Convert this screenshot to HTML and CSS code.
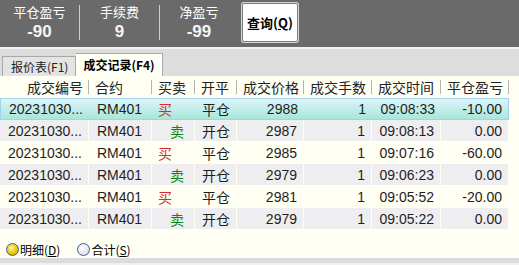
FILE: index.html
```html
<!DOCTYPE html>
<html lang="zh-CN">

<head>
    <meta charset="UTF-8">
    <title>成交记录</title>
    <link rel="stylesheet" href="styles.css">
</head>

<body>
    <div class="app">
        <div class="summary">
            <div class="stat">
                <div class="stat-label">平仓盈亏</div>
                <div class="stat-value">-90</div>
            </div>
            <div class="divider"></div>
            <div class="stat">
                <div class="stat-label">手续费</div>
                <div class="stat-value">9</div>
            </div>
            <div class="divider"></div>
            <div class="stat stat-last">
                <div class="stat-label">净盈亏</div>
                <div class="stat-value">-99</div>
            </div>
            <button class="query-btn">查询(<u>Q</u>)</button>
        </div>

        <div class="tabs">
            <div class="tab">报价表(F1)</div>
            <div class="tab active">成交记录(F4)</div>
        </div>

        <div class="panel">
            <table class="trades">
                <colgroup>
                    <col style="width:89px">
                    <col style="width:63px">
                    <col style="width:43px">
                    <col style="width:42px">
                    <col style="width:67px">
                    <col style="width:68px">
                    <col style="width:69px">
                    <col style="width:68px">
                </colgroup>
                <thead>
                    <tr>
                        <th class="first">成交编号</th>
                        <th>合约</th>
                        <th>买卖</th>
                        <th>开平</th>
                        <th>成交价格</th>
                        <th>成交手数</th>
                        <th>成交时间</th>
                        <th>平仓盈亏</th>
                    </tr>
                </thead>
                <tbody>
                    <tr class="selected">
                        <td>20231030...</td>
                        <td>RM401</td>
                        <td class="buy">买</td>
                        <td class="cjk">平仓</td>
                        <td class="num">2988</td>
                        <td class="num">1</td>
                        <td class="num">09:08:33</td>
                        <td class="num">-10.00</td>
                    </tr>
                    <tr class="alt">
                        <td>20231030...</td>
                        <td>RM401</td>
                        <td class="sell">卖</td>
                        <td class="cjk">开仓</td>
                        <td class="num">2987</td>
                        <td class="num">1</td>
                        <td class="num">09:08:13</td>
                        <td class="num">0.00</td>
                    </tr>
                    <tr>
                        <td>20231030...</td>
                        <td>RM401</td>
                        <td class="buy">买</td>
                        <td class="cjk">平仓</td>
                        <td class="num">2985</td>
                        <td class="num">1</td>
                        <td class="num">09:07:16</td>
                        <td class="num">-60.00</td>
                    </tr>
                    <tr class="alt">
                        <td>20231030...</td>
                        <td>RM401</td>
                        <td class="sell">卖</td>
                        <td class="cjk">开仓</td>
                        <td class="num">2979</td>
                        <td class="num">1</td>
                        <td class="num">09:06:23</td>
                        <td class="num">0.00</td>
                    </tr>
                    <tr>
                        <td>20231030...</td>
                        <td>RM401</td>
                        <td class="buy">买</td>
                        <td class="cjk">平仓</td>
                        <td class="num">2981</td>
                        <td class="num">1</td>
                        <td class="num">09:05:52</td>
                        <td class="num">-20.00</td>
                    </tr>
                    <tr class="alt">
                        <td>20231030...</td>
                        <td>RM401</td>
                        <td class="sell">卖</td>
                        <td class="cjk">开仓</td>
                        <td class="num">2979</td>
                        <td class="num">1</td>
                        <td class="num">09:05:22</td>
                        <td class="num">0.00</td>
                    </tr>
                </tbody>
            </table>

            <div class="filters">
                <label class="option"><span class="radio checked"></span>明细(<u>D</u>)</label>
                <label class="option"><span class="radio"></span>合计(<u>S</u>)</label>
            </div>
        </div>

        <div class="status-strip"></div>
    </div>
</body>

</html>
```

FILE: styles.css
```css
body {
    margin: 0;
    padding: 0;
    font-family: "Liberation Sans", "Noto Sans CJK SC", sans-serif;
    background-color: #f0f0f0;
    color: #1e1e1e;
    overflow: hidden;
}

.app {
    width: 519px;
    height: 265px;
    display: flex;
    flex-direction: column;
}

/* Summary bar */

.summary {
    height: 47px;
    background-color: #6a6a6a;
    display: flex;
    align-items: flex-start;
    flex-shrink: 0;
}

.stat {
    width: 79px;
    padding-top: 5px;
    text-align: center;
    color: #ffffff;
}

.stat-last {
    width: 78px;
}

.stat-label {
    font-family: "Noto Sans CJK SC", sans-serif;
    font-size: 13px;
    line-height: 14px;
}

.stat-value {
    margin-top: 3px;
    font-size: 17px;
    font-weight: bold;
    line-height: 20px;
    color: #f4f4f4;
}

.divider {
    width: 1px;
    height: 35px;
    margin-top: 5px;
    background-color: #cdcdcd;
}

.query-btn {
    margin: 3px 0 0 4px;
    width: 56px;
    height: 39px;
    padding: 0;
    background-color: #ffffff;
    border: 1px solid #7c7c7c;
    box-shadow: 0 0 0 1px #d6d6d6;
    border-radius: 2px;
    font-family: "Noto Sans CJK SC", sans-serif;
    font-size: 13px;
    font-weight: bold;
    color: #000000;
}

/* Tabs */

.tabs {
    height: 27px;
    border-top: 2px solid #f2f2f2;
    background-color: #dddddd;
    display: flex;
    align-items: flex-end;
    padding-left: 2px;
    flex-shrink: 0;
}

.tab {
    height: 19px;
    padding: 0 7px 0 8px;
    border: 1px solid #a9a9a9;
    border-bottom: none;
    background-color: #e4e4e4;
    font-family: "Noto Sans CJK SC", sans-serif;
    font-size: 12px;
    line-height: 19px;
    color: #222222;
    white-space: nowrap;
}

.tab.active {
    height: 22px;
    line-height: 22px;
    padding: 0 7px;
    background-color: #fffff3;
    border-left: none;
    font-weight: bold;
    color: #000000;
}

/* Trades table */

.panel {
    height: 182px;
    background-color: #fffff3;
    display: flex;
    flex-direction: column;
}

.trades {
    width: 509px;
    table-layout: fixed;
    border-collapse: separate;
    border-spacing: 0;
}

.trades th {
    position: relative;
    height: 22px;
    padding: 0 0 0 6px;
    text-align: left;
    font-family: "Noto Sans CJK SC", sans-serif;
    font-size: 14px;
    font-weight: normal;
    color: #222222;
    white-space: nowrap;
}

.trades th.first {
    text-align: right;
    padding: 0 6px 0 0;
}

.trades th::after {
    content: "";
    position: absolute;
    right: 0;
    top: 4px;
    bottom: 4px;
    width: 1px;
    background-color: #b4b4b4;
}

.trades td {
    height: 21px;
    padding: 0 0 0 8px;
    border-right: 1px solid #fffff3;
    border-bottom: 1px solid #fffff3;
    font-size: 14px;
    white-space: nowrap;
    overflow: hidden;
}

.trades tr.alt td {
    background-color: #eeeef1;
}

.trades td.num {
    text-align: right;
    padding: 0 6px 0 0;
}

.trades td.cjk {
    font-family: "Noto Sans CJK SC", sans-serif;
    padding-left: 7px;
}

.trades td.buy {
    font-family: "Noto Sans CJK SC", sans-serif;
    color: #d42c2c;
    padding-left: 6px;
}

.trades td.sell {
    font-family: "Noto Sans CJK SC", sans-serif;
    color: #0a8a0a;
    text-align: right;
    padding: 0 10px 0 0;
}

.trades tr.selected td {
    height: 20px;
    background: linear-gradient(#dcf5fb, #a8e7d8);
    border-right: none;
    border-top: 1px solid #a4d2ee;
    border-bottom: 1px solid #a4d2ee;
}

.trades tr.selected td:first-child {
    border-left: 1px solid #a4d2ee;
}

.trades tr.selected td:last-child {
    border-right: 1px solid #a4d2ee;
}

/* Filter radios */

.filters {
    margin-top: auto;
    padding: 0 0 1px 6px;
    height: 16px;
    display: flex;
    align-items: center;
    gap: 17px;
}

.option {
    display: flex;
    align-items: center;
    font-family: "Noto Sans CJK SC", sans-serif;
    font-size: 12px;
    color: #000000;
}

.radio {
    width: 11px;
    height: 11px;
    margin-right: 1px;
    border: 1px solid #3a5f96;
    border-radius: 50%;
    background: radial-gradient(circle at 40% 35%, #ffffff, #d6d6d6);
}

.radio.checked {
    background: radial-gradient(circle at 40% 35%, #fff6a0, #e8c800 55%, #c9a400);
}

.status-strip {
    height: 5px;
    border-bottom: 2px solid #f0f0f0;
    background-color: #dcdcdc;
}
```
